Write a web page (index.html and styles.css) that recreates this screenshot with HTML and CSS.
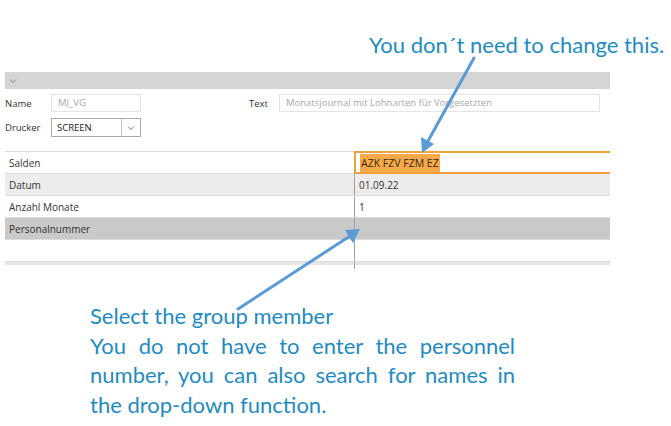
FILE: index.html
```html
<!DOCTYPE html>
<html>
<head>
<meta charset="utf-8">
<link rel="stylesheet" href="styles.css">
</head>
<body>
<div class="page">
  <div class="top-note">You don´t need to change this.</div>
  <div class="panel">
    <div class="bar"><svg class="chev" width="8" height="6" viewBox="0 0 8 6"><path d="M1 1.5 L4 4.5 L7 1.5" fill="none" stroke="#8a8a8a" stroke-width="1"/></svg></div>
    <div class="form-row r1">
      <span class="lbl">Name</span>
      <div class="inp name-inp">MJ_VG</div>
      <span class="lbl text-lbl">Text</span>
      <div class="inp text-inp">Monatsjournal mit Lohnarten für Vorgesetzten</div>
    </div>
    <div class="form-row r2">
      <span class="lbl">Drucker</span>
      <div class="combo"><span class="combo-val">SCREEN</span><span class="combo-btn"><svg width="8" height="6" viewBox="0 0 8 6"><path d="M1 1.5 L4 4.5 L7 1.5" fill="none" stroke="#777" stroke-width="1"/></svg></span></div>
    </div>
    <div class="grid">
      <div class="row white"><div class="c1">Salden</div><div class="c2 active"><span class="sel">AZK FZV FZM EZ</span></div></div>
      <div class="row light"><div class="c1">Datum</div><div class="c2">01.09.22</div></div>
      <div class="row white"><div class="c1">Anzahl Monate</div><div class="c2">1</div></div>
      <div class="row dark"><div class="c1">Personalnummer</div><div class="c2"></div></div>
      <div class="row white"><div class="c1"></div><div class="c2"></div></div>
      <div class="row tail"><div class="c1"></div><div class="c2"></div></div>
    </div>
  </div>
  <div class="bottom-note">
    <p class="first">Select the group member</p>
    <p class="just">You do not have to enter the personnel number, you can also search for names in the drop-down function.</p>
  </div>
  <svg class="arrows" width="671" height="426" viewBox="0 0 671 426">
    <g stroke="#5b9bd5" stroke-width="3" fill="none" stroke-linecap="round">
      <line x1="474" y1="58" x2="428" y2="141"/>
      <line x1="238" y1="309" x2="350" y2="236"/>
    </g>
    <polygon points="422,153 421,137 434,144" fill="#5b9bd5"/>
    <polygon points="360,229 345,230 353,243" fill="#5b9bd5"/>
  </svg>
</div>
</body>
</html>
```
FILE: styles.css
```css
html, body { margin: 0; padding: 0; background: #fff; }
body { width: 671px; height: 426px; overflow: hidden; }
.page { position: relative; width: 671px; height: 426px; font-family: "Open Sans", "Noto Sans", sans-serif; }

.top-note {
  height: 72px; box-sizing: border-box;
  padding: 32px 0 0 369px;
  font-family: Lato, "Open Sans", sans-serif;
  font-size: 22px; line-height: 26px;
  color: #1e8cc2; white-space: nowrap;
}

.panel { margin-left: 5px; width: 605px; }
.bar { height: 17px; background: #d5d5d5; display: flex; align-items: center; padding-left: 4px; }

.form-row { display: flex; align-items: center; }
.r1 { margin-top: 5px; height: 18px; }
.r2 { margin-top: 6px; height: 19px; }
.lbl { font-size: 9.5px; color: #333; width: 46px; }
.text-lbl { width: 30px; margin-left: 108px; }
.inp {
  box-sizing: border-box; height: 18px; border: 1px solid #e4e4e4;
  font-size: 9.5px; color: #a8a8a8; padding-left: 6px; line-height: 16px;
}
.name-inp { width: 90px; }
.text-inp { width: 321px; }
.combo {
  box-sizing: border-box; width: 90px; height: 19px; border: 1px solid #a9a9a9;
  display: flex; font-size: 9.5px; color: #222;
}
.combo-val { flex: 1; padding-left: 5px; line-height: 17px; }
.combo-btn { width: 18px; border-left: 1px solid #c4c4c4; display: flex; align-items: center; justify-content: center; }

.grid { margin-top: 14px; border-top: 1px solid #dcdcdc; }
.row { display: flex; height: 21px; border-bottom: 1px solid #dcdcdc; font-size: 10px; color: #333; }
.row.white { background: #fff; }
.row.light { background: #ececec; }
.row.dark { background: #c9c9c9; }
.row.tail { height: 3px; background: #e6e6e6; border-bottom: none; }
.row.tail .c2 { height: 7px; }
.c1 { width: 349px; box-sizing: border-box; padding-left: 4px; display: flex; align-items: center; }
.c2 { flex: 1; box-sizing: border-box; border-left: 1px solid #9e9e9e; padding-left: 4px; display: flex; align-items: center; }
.c2.active { border: 2px solid #f0a03c; border-right: none; margin-top: -1px; height: 23px; padding-left: 4px; }
.sel { background: #f5a94a; color: #3a2a10; padding: 2px 1px; font-size: 10.5px; }

.bottom-note {
  margin: 36px 0 0 90px; width: 425px;
  font-family: Lato, "Open Sans", sans-serif;
  font-size: 22px; line-height: 29.5px; color: #1e8cc2;
}
.bottom-note p { margin: 0; }
.just { text-align: justify; }

.arrows { position: absolute; left: 0; top: 0; pointer-events: none; }
```
